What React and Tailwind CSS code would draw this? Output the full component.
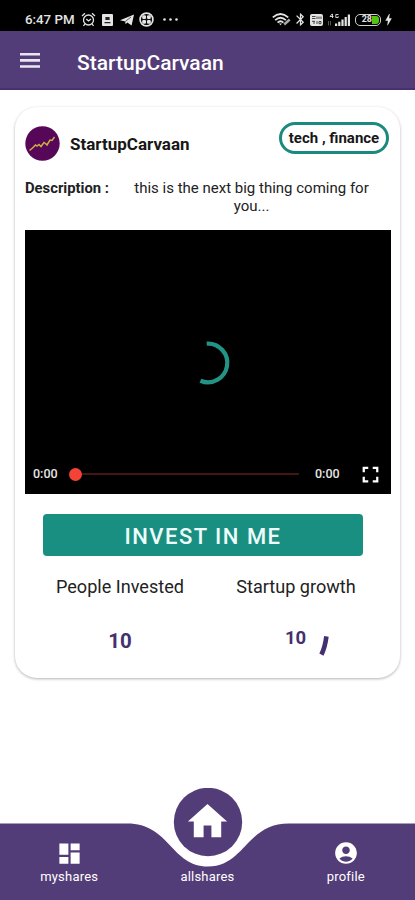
import {
  MdAccountCircle,
  MdBluetooth,
  MdBolt,
  MdDashboard,
  MdFullscreen,
  MdHome,
} from 'react-icons/md';

function StatusBar() {
  return (
    <div className="flex h-[31px] items-center bg-black pt-2 pl-[25px] text-[#e4e4e4]">
      <span className="w-[50px] text-[13.3px] leading-4 font-medium whitespace-nowrap">6:47 PM</span>

      {/* Notification icons */}
      <svg className="ml-[6px] h-[15px] w-[15px]" viewBox="0 0 15 15" fill="none" stroke="currentColor" strokeWidth="1.3">
        <circle cx="7.5" cy="8" r="5" />
        <path d="M1 4 L4 1.3 M14 4 L11 1.3 M3.8 12 L2.5 14 M11.2 12 L12.5 14" />
        <path d="M5.3 7 L7.5 9 L10 7" />
      </svg>
      <svg className="ml-[6px] h-3 w-[11px]" viewBox="0 0 11 12">
        <rect width="11" height="12" rx="1" fill="currentColor" />
        <path d="M3.4 3 H7.6 V6 H3.4 Z M2.5 8 H8.5 V9.3 H2.5 Z" fill="#222" />
      </svg>
      <svg className="ml-[7px] h-3 w-[14px]" viewBox="0 0 14 12" fill="currentColor">
        <path d="M0 6.2 L14 0.5 L11.6 11.5 L7.3 8.6 L5.6 10.3 L5.2 7.6 Z" />
        <path d="M5.2 7.6 L11 3" stroke="#222" strokeWidth="0.7" />
      </svg>
      <svg className="ml-[5px] h-[15px] w-[15px]" viewBox="0 0 15 15">
        <circle cx="7.5" cy="7.5" r="6.4" fill="none" stroke="currentColor" strokeWidth="1.7" />
        <path d="M5.1 3.2 V11.8 M9.9 3.2 V11.8 M3.2 5.1 H11.8 M3.2 9.9 H11.8" stroke="currentColor" strokeWidth="2.6" />
        <path d="M7.5 2.5 V12.5 M2.5 7.5 H12.5" stroke="#111" strokeWidth="1" />
      </svg>
      <svg className="ml-[9px] h-[3px] w-[15px]" viewBox="0 0 15 3" fill="currentColor">
        <circle cx="1.5" cy="1.5" r="1.3" />
        <circle cx="7.5" cy="1.5" r="1.3" />
        <circle cx="13.5" cy="1.5" r="1.3" />
      </svg>

      {/* Connection and battery */}
      <svg className="ml-[94px] h-[13px] w-[19px]" viewBox="0 0 19 13" fill="none" stroke="currentColor" strokeWidth="1.8">
        <path d="M0.8 4.4 Q8.5 -2.4 16.2 4.4" />
        <path d="M3.2 7.1 Q8.5 2.3 13.8 7.1" />
        <path d="M5.6 9.6 Q8.5 7 11.4 9.6" />
        <path d="M7.1 10.6 L8.5 12.3 L9.9 10.6 Z" fill="currentColor" stroke="none" />
        <path d="M12.2 11.5 L17.7 6.5" strokeWidth="2.4" stroke="#aaa" />
      </svg>
      <MdBluetooth className="ml-[2px] h-[15px] w-[15px]" />
      <svg className="ml-[2px] h-3 w-[13px]" viewBox="0 0 13 12">
        <rect width="13" height="12" rx="2" fill="currentColor" />
        <path d="M2 2.5 H5.5 M2 4.5 H5.5 M7 2.5 V5 M9 2.5 V5 M11 2.5 V5 M2 7.3 H5 M4 7.3 V10 M7 7 V10 M9 7.5 H11 V9.7 H9 Z" stroke="#333" strokeWidth="0.9" fill="none" />
      </svg>
      <svg className="ml-[5px] h-[14px] w-[23px]" viewBox="0 0 23 14" fill="currentColor">
        <path d="M4.2 0.8 L2 3.5 H5.5 M4.5 1 V5 M10.5 1.5 H7.8 V4.5 H10.2 V3.2" fill="none" stroke="currentColor" strokeWidth="0.9" />
        <path d="M0.5 8 V12.5 M2.5 8 V12.5" stroke="#555" strokeWidth="1" />
        <path d="M7 10.5 H9.2 V13 H7 Z M10.2 8.8 H12.4 V13 H10.2 Z M13.4 6.5 H15.6 V13 H13.4 Z M16.6 4 H18.8 V13 H16.6 Z M19.8 1.5 H22 V13 H19.8 Z" />
      </svg>
      <div className="ml-[4px] flex h-3 w-[26px] items-center justify-end rounded-[5px] border-[1.5px] border-[#d0d0d0] pr-px">
        <span className="text-[9px] leading-none font-bold">28</span>
        <span className="h-2 w-[7px] rounded-r-[3px] bg-[#54c411]" />
      </div>
      <MdBolt className="h-[15px] w-[15px]" />
    </div>
  );
}

function Header() {
  return (
    <header className="flex h-[59px] items-center border-b-2 border-[#46306f] bg-[#533d78] pl-5 text-white">
      <svg className="mt-[2px] h-[15px] w-5" viewBox="0 0 20 15" fill="#eae6f0">
        <path d="M0 0 H20 V2.6 H0 Z M0 6.1 H20 V8.7 H0 Z M0 12.2 H20 V14.8 H0 Z" />
      </svg>
      <h1 className="mt-[6px] ml-[37px] text-[21px] leading-7 font-medium">StartupCarvaan</h1>
    </header>
  );
}

function VideoPlayer() {
  return (
    <div className="flex h-[264px] flex-col bg-black text-[#e6e6e6]">
      <div className="flex flex-1 items-center justify-center pt-[41px]">
        <svg className="h-12 w-12" viewBox="0 0 48 48" fill="none">
          <path d="M22.7 4.7 A19.3 19.3 0 1 1 16.4 41.7" stroke="#239387" strokeWidth="4.2" />
        </svg>
      </div>
      <div className="flex h-[40px] items-center pl-[8px] text-[12.5px] font-medium">
        <span className="w-[26px] whitespace-nowrap">0:00</span>
        <span className="ml-[10px] h-[13px] w-[13px] rounded-full bg-[#f44336]" />
        <span className="h-[2px] w-[217px] bg-[#441512]" />
        <span className="ml-[16px] w-[26px] whitespace-nowrap">0:00</span>
        <MdFullscreen className="ml-[16px] h-[27px] w-[27px] text-white" />
      </div>
    </div>
  );
}

function StartupCard() {
  return (
    <section className="mx-[15px] mt-[17px] h-[571px] rounded-[22px] bg-white pt-[14px] pr-[9px] pl-[10px] shadow-[0_1px_3px_rgba(0,0,0,0.3)]">
      <div className="flex h-[53px] items-start">
        <svg className="mt-[5px] h-[35px] w-[35px]" viewBox="0 0 35 35">
          <circle cx="17.5" cy="17.5" r="17.2" fill="#570758" />
          <path d="M4.5 24.5 L7.5 22 L10.5 19 L12 20 L14 18.5 L16 20.5 L19 16.5 L20.5 17.5 L22 19 L25 14 L27 14.5 L29.5 11" fill="none" stroke="#cbb044" strokeWidth="1.5" />
        </svg>
        <h2 className="mt-[12px] ml-[10px] text-[17px] leading-[22px] font-bold text-[#171717]">StartupCarvaan</h2>
        <span className="mt-px mr-[2px] ml-auto flex h-[32px] w-[110px] items-center justify-center rounded-full border-[3px] border-[#1b8a7e] text-[15px] font-bold whitespace-nowrap text-[#171717]">
          tech , finance
        </span>
      </div>

      <div className="mt-[5px] flex h-[51px] leading-[18px] text-[#222]">
        <span className="w-[101px] text-[14.8px] font-bold">Description :</span>
        <p className="w-[251px] text-center text-[15px]">this is the next big thing coming for you...</p>
      </div>

      <VideoPlayer />

      <button className="mt-[20px] ml-[18px] block h-[42px] w-[320px] rounded-[4px] bg-[#198f82] pt-[2px] text-[22px] font-medium tracking-[1.5px] text-[#effcfa]">
        INVEST IN ME
      </button>

      <div className="mt-[19px] flex text-[18.1px] leading-6 text-[#222]">
        <div className="w-[190px] text-center">
          <p>People Invested</p>
          <p className="mt-[30px] text-[20.5px] font-bold text-[#443070]">10</p>
        </div>
        <div className="w-[162px] text-center">
          <p>Startup growth</p>
          <div className="mt-[25px] flex pl-[70px] font-bold text-[#443070]">
            <span className="mt-[2px] text-[18.5px]">10</span>
            <svg className="mt-[12px] ml-[12px] h-[21px] w-[11px]" viewBox="0 0 11 21">
              <path d="M8.4 0.4 C7.6 7 6.4 12.6 3.4 18.6" fill="none" stroke="currentColor" strokeWidth="4.6" />
            </svg>
          </div>
        </div>
      </div>
    </section>
  );
}

function BottomNav() {
  return (
    <nav className="relative mt-auto h-[112px] text-white">
      {/* Bar with the notch and the floating home button */}
      <svg className="absolute inset-0 h-full w-full" viewBox="0 0 415 112" fill="#533d78">
        <path d="M0 35.5 H127 C170 35.5 171 78.5 208 78.5 C245 78.5 246 35.5 289 35.5 H415 V112 H0 Z" />
        <circle cx="208" cy="34" r="34.2" />
      </svg>
      <div className="relative grid grid-cols-3 text-center text-[13px] leading-4">
        <a className="flex flex-col items-center pt-[52px]">
          <MdDashboard className="h-[27px] w-[27px]" />
          <span className="mt-[2px] tracking-[0.2px]">myshares</span>
        </a>
        <a className="flex flex-col items-center pt-[10px]">
          <MdHome className="h-[47px] w-[47px]" />
          <span className="mt-[24px] tracking-[0.2px]">allshares</span>
        </a>
        <a className="flex flex-col items-center pt-[52px]">
          <MdAccountCircle className="h-[26px] w-[26px]" />
          <span className="mt-[3px] tracking-[0.2px]">profile</span>
        </a>
      </div>
    </nav>
  );
}

export default function App() {
  return (
    <div className="flex h-[900px] w-[415px] flex-col overflow-hidden bg-white font-['Roboto',sans-serif]">
      <StatusBar />
      <Header />
      <StartupCard />
      <BottomNav />
    </div>
  );
}
